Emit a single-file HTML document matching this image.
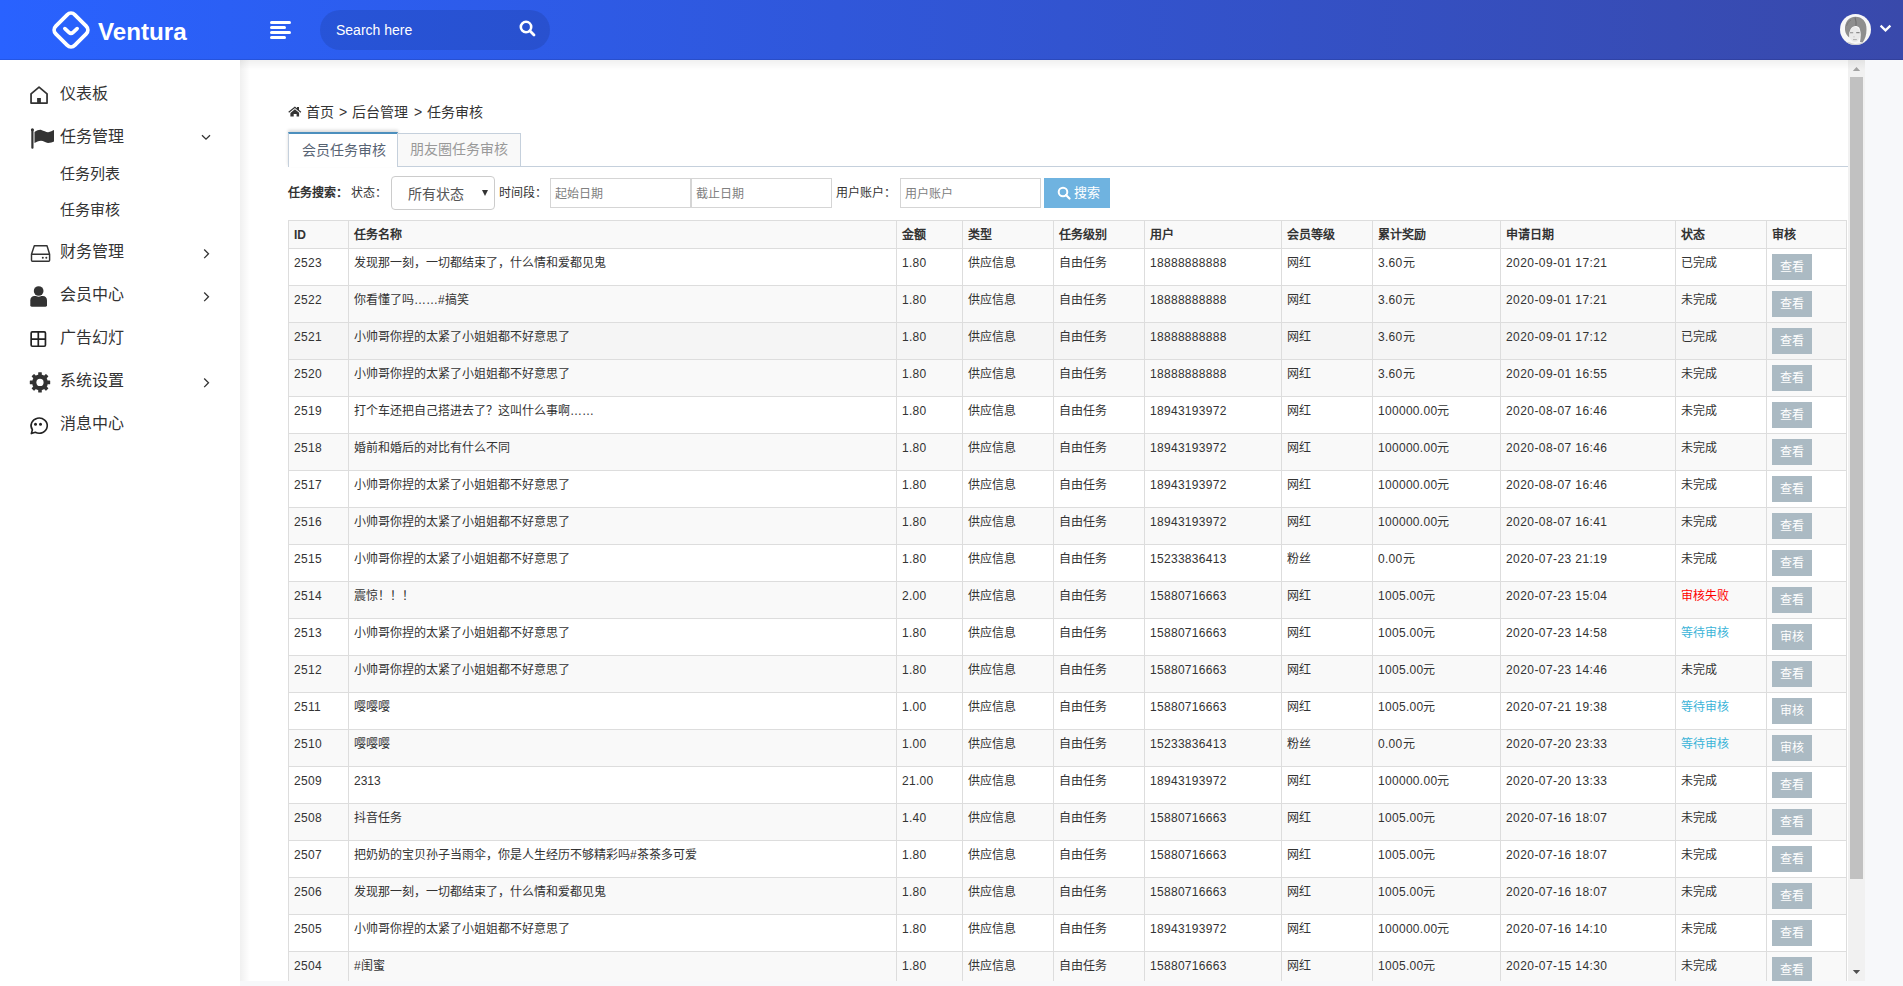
<!DOCTYPE html>
<html lang="zh-CN"><head><meta charset="utf-8">
<style>
*{box-sizing:border-box}
html,body{margin:0;padding:0;width:1903px;height:986px;overflow:hidden;background:#f7f8fa;font-family:"Liberation Sans",sans-serif;color:#333}
#hdr{position:absolute;left:0;top:0;width:1903px;height:60px;background:linear-gradient(to right,#2962ff 0%,#3949ab 100%);}
#hdr .bot{position:absolute;left:0;right:0;bottom:0;height:1px;background:rgba(0,0,40,.12)}
#logo{position:absolute;left:52px;top:11px}
#brand{position:absolute;left:98px;top:18px;font-size:24.2px;font-weight:bold;color:#fff;letter-spacing:0}
#ham{position:absolute;left:270px;top:21px}
#srch{position:absolute;left:320px;top:10px;width:230px;height:40px;border-radius:20px;background:rgba(0,0,0,.1)}
#srch span{position:absolute;left:16px;top:12px;font-size:14px;color:#fff;line-height:16px}
#srch svg{position:absolute;left:198.5px;top:10px}
#avatar{position:absolute;left:1840px;top:14px}
#achev{position:absolute;left:1879px;top:24px}
#side{position:absolute;left:0;top:60px;width:240px;height:926px;background:#fff}
.mi{position:absolute;left:60px;font-size:16px;line-height:20px;color:#333}
.sub{position:absolute;left:60px;font-size:15px;line-height:20px;color:#333}
.ic{position:absolute}
#frame{position:absolute;left:240px;top:60px;width:1625px;height:921px;background:#fff;overflow:hidden}
#inner{position:absolute;left:-240px;top:-60px;width:1903px;height:986px}
#frame .shl{z-index:2;position:absolute;left:0;top:0;width:10px;height:100%;background:linear-gradient(to right,rgba(0,0,0,.06),rgba(0,0,0,0))}
#frame .sht{z-index:2;position:absolute;left:0;top:0;width:100%;height:10px;background:linear-gradient(to bottom,rgba(0,0,0,.06),rgba(0,0,0,0))}
#sb{position:absolute;left:1848px;top:60px;width:17px;height:921px;background:#f1f1f1}
#sb .thumb{position:absolute;left:2px;top:17px;width:13px;height:802px;background:#c1c1c1}
#bc{position:absolute;left:289px;top:103px;font-size:14px;line-height:18px;color:#333;white-space:nowrap}
#bc span{position:absolute;top:0}
#tabs{position:absolute;left:288px;top:132px;width:1560px;height:35px;border-bottom:1px solid #c5d0dc}
.tab{position:absolute;top:0;height:35px;font-size:14px;line-height:20px;white-space:nowrap}
.tab.a{left:0;width:110px;border-top:2px solid #4c8fbd;border-left:1px solid #c5d0dc;border-right:1px solid #c5d0dc;background:#fff;color:#576373;height:35px;padding:6px 0 0 13px;box-shadow:0 -2px 3px 0 rgba(0,0,0,.15)}
.tab.b{left:109px;top:1px;width:124px;border:1px solid #c5d0dc;border-bottom:0;background:#f9f9f9;color:#999;height:33px;padding:5px 0 0 12px}
#form{position:absolute;left:288px;top:176px;width:900px;height:36px;font-size:12px;color:#333;white-space:nowrap}
#form .lb{position:absolute;top:9px;line-height:17px}
#sel{position:absolute;left:103px;top:0;width:104px;height:34px;border:1px solid #ccc;border-radius:4px;background:#fff}
#sel span{position:absolute;left:16px;top:9px;font-size:14px;color:#555;line-height:16px}
#sel i{position:absolute;left:90px;top:13px;width:0;height:0;border-left:3px solid transparent;border-right:3px solid transparent;border-top:6px solid #333}
.inp{position:absolute;top:2px;height:30px;width:141px;border:1px solid #d5d5d5;background:#fff}
.inp span{position:absolute;left:4px;top:7px;font-size:12px;color:#808080;line-height:16px}
#sbtn{position:absolute;left:756px;top:2px;width:66px;height:30px;background:#6fb3e0;color:#fff;font-size:13px}
#sbtn svg{position:absolute;left:13px;top:8px}
#sbtn span{position:absolute;left:30px;top:7px;line-height:16px}
#tbl{position:absolute;left:288px;top:220px;border-collapse:collapse;table-layout:fixed;width:1558px;font-size:12px;color:#333}
#tbl td,#tbl th{border:1px solid #ddd;padding:6px 5px 4px;vertical-align:top;text-align:left;line-height:17px;white-space:nowrap;overflow:hidden}
#tbl th{font-weight:bold;height:28px;background:#f9f9f9}
#tbl td:nth-child(1),#tbl td:nth-child(3),#tbl td:nth-child(6),#tbl td:nth-child(8){letter-spacing:0.3px}
#tbl td:nth-child(9){letter-spacing:0.42px}
#tbl td{height:37px}
#tbl tr.s td{background:#f9f9f9}
#tbl tr.h td{background:#f5f5f5}
.red{color:#f00}
.blue{color:#3bb4d8}
.btn{position:relative;top:-1px;display:inline-block;width:40px;height:26px;background:#abbac3;color:#fff;text-align:center;line-height:26px;font-size:12px;margin-left:0}
</style></head><body>
<div id="hdr">
 <svg id="logo" width="38" height="38" viewBox="0 0 38 38"><rect x="5.5" y="5.5" width="27" height="27" rx="5.5" ry="5.5" transform="rotate(45 19 19)" fill="none" stroke="#fff" stroke-width="3.8"/><path d="M12.9 17.6 L16.9 21.3 Q19 23.2 21.1 21.3 L25.1 17.6" fill="none" stroke="#fff" stroke-width="3.7" stroke-linecap="round" stroke-linejoin="round"/></svg>
 <div id="brand">Ventura</div>
 <svg id="ham" width="21" height="19" viewBox="0 0 21 19"><g fill="#fff"><rect x="0" y="0" width="21" height="3" rx="1.5"/><rect x="0" y="5" width="16" height="3" rx="1.5"/><rect x="0" y="10" width="21" height="3" rx="1.5"/><rect x="0" y="15" width="16" height="3" rx="1.5"/></g></svg>
 <div id="srch"><span>Search here</span><svg width="17" height="17" viewBox="0 0 17 17"><circle cx="7" cy="7" r="5.2" fill="none" stroke="#fff" stroke-width="2.6"/><path d="M10.8 10.8 L15 15" stroke="#fff" stroke-width="2.8" stroke-linecap="round"/></svg></div>
 <svg id="avatar" width="31" height="31" viewBox="0 0 31 31"><defs><clipPath id="cc"><circle cx="15.5" cy="15.5" r="15.5"/></clipPath></defs><circle cx="15.5" cy="15.5" r="15.5" fill="#f7f7f7"/><g clip-path="url(#cc)"><path d="M5 16 C4.5 8,9 2.8,15.5 2.8 C22 2.8,26.8 7.5,26.5 15.5 C26.5 21,25 25.5,22.5 28.5 L20 28 C21 23,21 18,19.5 14 C17 11,13 11.5,11 14.5 C9.8 17,9.6 20,9.2 23.5 C7 21.5,5.3 19,5 16 Z" fill="#8e8e8e"/><path d="M15 3.5 C16 6.5,16.5 9.5,16 12" stroke="#707070" stroke-width="1.1" fill="none"/><path d="M6.5 12 C7.5 9,9 7,11 6" stroke="#7a7a7a" stroke-width="1" fill="none"/><ellipse cx="14.8" cy="20.5" rx="5.6" ry="7.4" fill="#e9e9e9"/><path d="M10 18.8 H13.2 M16.2 18.6 H19.6" stroke="#8a8a8a" stroke-width="1.1"/><path d="M14 22 V23.5" stroke="#c0c0c0" stroke-width="0.8"/><path d="M13 25.6 H16.8" stroke="#a5a5a5" stroke-width="0.9"/><path d="M5 28.5 C9 27,12 30,15 30 C19 30,22 28.5,26 28 L26 31 L5 31 Z" fill="#d2d2d2"/></g></svg>
 <svg id="achev" width="13" height="9" viewBox="0 0 13 9"><path d="M1.6 1.6 L6.5 6.4 L11.4 1.6" fill="none" stroke="#fff" stroke-width="2.2"/></svg>
 <div class="bot"></div>
</div>
<div id="side">
 <svg class="ic" style="left:26px;top:22px" width="26" height="26" viewBox="0 0 26 26"><path d="M5.05 21 V11.8 L13.05 5.2 L21.05 11.8 V21 Z" fill="none" stroke="#333" stroke-width="1.75" stroke-linejoin="round"/><rect x="11.1" y="16" width="3.8" height="5" fill="#333"/></svg>
 <div class="mi" style="top:24px">仪表板</div>
 <svg class="ic" style="left:26px;top:64px" width="32" height="28" viewBox="0 0 32 28"><rect x="5.3" y="5" width="2.2" height="19.7" rx="1" fill="#333"/><circle cx="6.4" cy="5.8" r="1.5" fill="#333"/><path d="M8.5 8 C11 6.5,13.5 5.5,15.3 6 C18 6.7,20 8.3,22.2 8.2 C24.5 8.1,26.5 6.8,28 6.1 L28 17.5 C26.5 18.2,24.5 18.9,22 18.9 C19.5 18.9,17.5 16.8,15 16.8 C12.5 16.8,10.5 18.2,8.5 18.9 Z" fill="#333"/></svg>
 <div class="mi" style="top:67px">任务管理</div>
 <svg class="ic" style="left:200px;top:72px" width="12" height="10" viewBox="0 0 12 10"><path d="M2 3.2 L6 7.2 L10 3.2" fill="none" stroke="#333" stroke-width="1.3"/></svg>
 <div class="sub" style="top:104px">任务列表</div>
 <div class="sub" style="top:140px">任务审核</div>
 <svg class="ic" style="left:26px;top:180px" width="28" height="28" viewBox="0 0 28 28"><path d="M5.5 14.2 L8.3 5.7 H21 L23.6 14.2 V20.3 Q23.6 21.2 22.7 21.2 H6.4 Q5.5 21.2 5.5 20.3 Z M5.5 14.2 H23.6" fill="none" stroke="#333" stroke-width="1.45" stroke-linejoin="round"/><circle cx="16.8" cy="17.8" r="1" fill="#333"/><circle cx="20.3" cy="17.8" r="1" fill="#333"/></svg>
 <div class="mi" style="top:182px">财务管理</div>
 <svg class="ic" style="left:200px;top:188px" width="12" height="12" viewBox="0 0 12 12"><path d="M4.2 1.5 L8.5 5.8 L4.2 10.1" fill="none" stroke="#333" stroke-width="1.3"/></svg>
 <svg class="ic" style="left:26px;top:222px" width="28" height="28" viewBox="0 0 28 28"><path d="M4.3 18.5 C4.3 15.5,6 13.9,8.5 13.9 H16.8 C19.3 13.9,21 15.5,21 18.5 V23.3 Q21 24.7,19.6 24.7 H5.7 Q4.3 24.7,4.3 23.3 Z" fill="#333"/><circle cx="12.65" cy="9" r="5.7" fill="#fff"/><circle cx="12.65" cy="9" r="4.85" fill="#333"/></svg>
 <div class="mi" style="top:225px">会员中心</div>
 <svg class="ic" style="left:200px;top:231px" width="12" height="12" viewBox="0 0 12 12"><path d="M4.2 1.5 L8.5 5.8 L4.2 10.1" fill="none" stroke="#333" stroke-width="1.3"/></svg>
 <svg class="ic" style="left:26px;top:266px" width="28" height="28" viewBox="0 0 28 28"><rect x="5.15" y="5.95" width="14.3" height="14.3" rx="1.2" fill="none" stroke="#222" stroke-width="1.7"/><path d="M12.3 5.95 V20.25 M5.15 13.1 H19.45" stroke="#222" stroke-width="1.7"/></svg>
 <div class="mi" style="top:268px">广告幻灯</div>
 <svg class="ic" style="left:26px;top:308px" width="28" height="28" viewBox="0 0 28 28"><g fill="#333" transform="translate(14 14.4)"><circle r="7.9"/><rect x="-1.8" y="-10.2" width="3.6" height="20.4" rx="0.5"/><rect x="-1.8" y="-10.2" width="3.6" height="20.4" rx="0.5" transform="rotate(45)"/><rect x="-1.8" y="-10.2" width="3.6" height="20.4" rx="0.5" transform="rotate(90)"/><rect x="-1.8" y="-10.2" width="3.6" height="20.4" rx="0.5" transform="rotate(135)"/></g><circle cx="14" cy="14.4" r="3.6" fill="#fff"/></svg>
 <div class="mi" style="top:311px">系统设置</div>
 <svg class="ic" style="left:200px;top:317px" width="12" height="12" viewBox="0 0 12 12"><path d="M4.2 1.5 L8.5 5.8 L4.2 10.1" fill="none" stroke="#333" stroke-width="1.3"/></svg>
 <svg class="ic" style="left:25px;top:349.5px" width="28" height="28" viewBox="0 0 28 28"><path d="M7.4 19.8 A8.1 7.6 0 1 1 10.3 22.3 L6.3 23.6 Z" fill="none" stroke="#222" stroke-width="1.6" stroke-linejoin="round"/><circle cx="10.5" cy="14.3" r="1.5" fill="#222"/><circle cx="15.5" cy="14.3" r="1.5" fill="#222"/></svg>
 <div class="mi" style="top:354px">消息中心</div>
</div>
<div id="frame"><div class="shl"></div><div class="sht"></div><div id="inner">
<div id="bc"><svg style="position:absolute;left:-3px;top:-1px" width="18" height="18" viewBox="0 0 18 18"><path d="M2.7 10.2 L8.9 5.2 L14.9 10.2" fill="none" stroke="#333" stroke-width="1.2"/><rect x="11" y="5" width="2" height="3" fill="#333"/><path d="M4.4 10.9 L8.9 7.3 L13.1 10.7 V14.6 H10.6 V12 H7.7 V14.6 H4.4 Z" fill="#333"/></svg><span style="left:17px">首页</span><span style="left:50px">&gt;</span><span style="left:63px">后台管理</span><span style="left:125px">&gt;</span><span style="left:138px">任务审核</span></div>
<div id="tabs"><div class="tab a">会员任务审核</div><div class="tab b">朋友圈任务审核</div></div>
<div id="form">
 <span class="lb" style="left:0;font-weight:bold">任务搜索：</span>
 <span class="lb" style="left:63px">状态：</span>
 <div id="sel"><span>所有状态</span><i></i></div>
 <span class="lb" style="left:211px">时间段：</span>
 <div class="inp" style="left:262px"><span>起始日期</span></div>
 <div class="inp" style="left:403px"><span>截止日期</span></div>
 <span class="lb" style="left:548px">用户账户：</span>
 <div class="inp" style="left:612px"><span>用户账户</span></div>
 <div id="sbtn"><svg width="14" height="14" viewBox="0 0 14 14"><circle cx="6" cy="6" r="4.3" fill="none" stroke="#fff" stroke-width="2"/><path d="M9 9 L12.5 12.5" stroke="#fff" stroke-width="2.2" stroke-linecap="round"/></svg><span>搜索</span></div>
</div>
<table id="tbl">
<colgroup><col style="width:60px"><col style="width:548px"><col style="width:66px"><col style="width:91px"><col style="width:91px"><col style="width:137px"><col style="width:91px"><col style="width:128px"><col style="width:175px"><col style="width:91px"><col style="width:80px"></colgroup>
<tr><th>ID</th><th>任务名称</th><th>金额</th><th>类型</th><th>任务级别</th><th>用户</th><th>会员等级</th><th>累计奖励</th><th>申请日期</th><th>状态</th><th>审核</th></tr>
<tr><td>2523</td><td>发现那一刻，一切都结束了，什么情和爱都见鬼</td><td>1.80</td><td>供应信息</td><td>自由任务</td><td>18888888888</td><td>网红</td><td>3.60元</td><td>2020-09-01 17:21</td><td><span>已完成</span></td><td><a class="btn">查看</a></td></tr>
<tr class="s"><td>2522</td><td>你看懂了吗……#搞笑</td><td>1.80</td><td>供应信息</td><td>自由任务</td><td>18888888888</td><td>网红</td><td>3.60元</td><td>2020-09-01 17:21</td><td><span>未完成</span></td><td><a class="btn">查看</a></td></tr>
<tr class="h"><td>2521</td><td>小帅哥你捏的太紧了小姐姐都不好意思了</td><td>1.80</td><td>供应信息</td><td>自由任务</td><td>18888888888</td><td>网红</td><td>3.60元</td><td>2020-09-01 17:12</td><td><span>已完成</span></td><td><a class="btn">查看</a></td></tr>
<tr class="s"><td>2520</td><td>小帅哥你捏的太紧了小姐姐都不好意思了</td><td>1.80</td><td>供应信息</td><td>自由任务</td><td>18888888888</td><td>网红</td><td>3.60元</td><td>2020-09-01 16:55</td><td><span>未完成</span></td><td><a class="btn">查看</a></td></tr>
<tr><td>2519</td><td>打个车还把自己搭进去了？这叫什么事啊……</td><td>1.80</td><td>供应信息</td><td>自由任务</td><td>18943193972</td><td>网红</td><td>100000.00元</td><td>2020-08-07 16:46</td><td><span>未完成</span></td><td><a class="btn">查看</a></td></tr>
<tr class="s"><td>2518</td><td>婚前和婚后的对比有什么不同</td><td>1.80</td><td>供应信息</td><td>自由任务</td><td>18943193972</td><td>网红</td><td>100000.00元</td><td>2020-08-07 16:46</td><td><span>未完成</span></td><td><a class="btn">查看</a></td></tr>
<tr><td>2517</td><td>小帅哥你捏的太紧了小姐姐都不好意思了</td><td>1.80</td><td>供应信息</td><td>自由任务</td><td>18943193972</td><td>网红</td><td>100000.00元</td><td>2020-08-07 16:46</td><td><span>未完成</span></td><td><a class="btn">查看</a></td></tr>
<tr class="s"><td>2516</td><td>小帅哥你捏的太紧了小姐姐都不好意思了</td><td>1.80</td><td>供应信息</td><td>自由任务</td><td>18943193972</td><td>网红</td><td>100000.00元</td><td>2020-08-07 16:41</td><td><span>未完成</span></td><td><a class="btn">查看</a></td></tr>
<tr><td>2515</td><td>小帅哥你捏的太紧了小姐姐都不好意思了</td><td>1.80</td><td>供应信息</td><td>自由任务</td><td>15233836413</td><td>粉丝</td><td>0.00元</td><td>2020-07-23 21:19</td><td><span>未完成</span></td><td><a class="btn">查看</a></td></tr>
<tr class="s"><td>2514</td><td>震惊！！！</td><td>2.00</td><td>供应信息</td><td>自由任务</td><td>15880716663</td><td>网红</td><td>1005.00元</td><td>2020-07-23 15:04</td><td><span class="red">审核失败</span></td><td><a class="btn">查看</a></td></tr>
<tr><td>2513</td><td>小帅哥你捏的太紧了小姐姐都不好意思了</td><td>1.80</td><td>供应信息</td><td>自由任务</td><td>15880716663</td><td>网红</td><td>1005.00元</td><td>2020-07-23 14:58</td><td><span class="blue">等待审核</span></td><td><a class="btn">审核</a></td></tr>
<tr class="s"><td>2512</td><td>小帅哥你捏的太紧了小姐姐都不好意思了</td><td>1.80</td><td>供应信息</td><td>自由任务</td><td>15880716663</td><td>网红</td><td>1005.00元</td><td>2020-07-23 14:46</td><td><span>未完成</span></td><td><a class="btn">查看</a></td></tr>
<tr><td>2511</td><td>嘤嘤嘤</td><td>1.00</td><td>供应信息</td><td>自由任务</td><td>15880716663</td><td>网红</td><td>1005.00元</td><td>2020-07-21 19:38</td><td><span class="blue">等待审核</span></td><td><a class="btn">审核</a></td></tr>
<tr class="s"><td>2510</td><td>嘤嘤嘤</td><td>1.00</td><td>供应信息</td><td>自由任务</td><td>15233836413</td><td>粉丝</td><td>0.00元</td><td>2020-07-20 23:33</td><td><span class="blue">等待审核</span></td><td><a class="btn">审核</a></td></tr>
<tr><td>2509</td><td>2313</td><td>21.00</td><td>供应信息</td><td>自由任务</td><td>18943193972</td><td>网红</td><td>100000.00元</td><td>2020-07-20 13:33</td><td><span>未完成</span></td><td><a class="btn">查看</a></td></tr>
<tr class="s"><td>2508</td><td>抖音任务</td><td>1.40</td><td>供应信息</td><td>自由任务</td><td>15880716663</td><td>网红</td><td>1005.00元</td><td>2020-07-16 18:07</td><td><span>未完成</span></td><td><a class="btn">查看</a></td></tr>
<tr><td>2507</td><td>把奶奶的宝贝孙子当雨伞，你是人生经历不够精彩吗#茶茶多可爱</td><td>1.80</td><td>供应信息</td><td>自由任务</td><td>15880716663</td><td>网红</td><td>1005.00元</td><td>2020-07-16 18:07</td><td><span>未完成</span></td><td><a class="btn">查看</a></td></tr>
<tr class="s"><td>2506</td><td>发现那一刻，一切都结束了，什么情和爱都见鬼</td><td>1.80</td><td>供应信息</td><td>自由任务</td><td>15880716663</td><td>网红</td><td>1005.00元</td><td>2020-07-16 18:07</td><td><span>未完成</span></td><td><a class="btn">查看</a></td></tr>
<tr><td>2505</td><td>小帅哥你捏的太紧了小姐姐都不好意思了</td><td>1.80</td><td>供应信息</td><td>自由任务</td><td>18943193972</td><td>网红</td><td>100000.00元</td><td>2020-07-16 14:10</td><td><span>未完成</span></td><td><a class="btn">查看</a></td></tr>
<tr class="s"><td>2504</td><td>#闺蜜</td><td>1.80</td><td>供应信息</td><td>自由任务</td><td>15880716663</td><td>网红</td><td>1005.00元</td><td>2020-07-15 14:30</td><td><span>未完成</span></td><td><a class="btn">查看</a></td></tr>
</table>
</div></div>
<div id="sb"><svg style="position:absolute;left:0;top:0" width="17" height="17" viewBox="0 0 17 17"><path d="M4.8 11 L8.5 6.9 L12.2 11 Z" fill="#a3a3a3"/></svg><div class="thumb"></div><svg style="position:absolute;left:0;top:904px" width="17" height="17" viewBox="0 0 17 17"><path d="M4.8 5.9 L8.5 10 L12.2 5.9 Z" fill="#505050"/></svg></div>
</body></html>
